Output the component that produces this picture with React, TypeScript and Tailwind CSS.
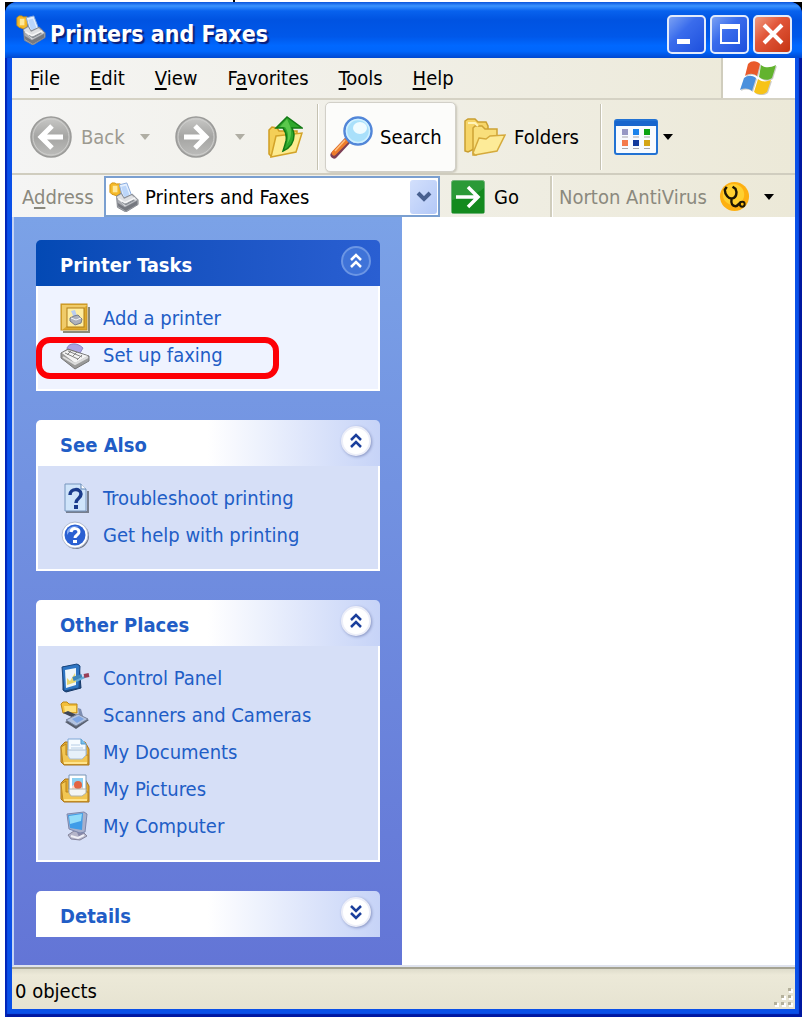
import { useState } from "react";
import type { ReactNode } from "react";

type Task = {
  label: string;
  icon: ReactNode;
  highlighted?: boolean;
};

const PrinterFolderIcon = ({ className }: { className: string }) => (
  <svg viewBox="0 0 32 32" className={className} aria-hidden="true">
    <path d="M1 3l2-2h3l2 1h4v11l-3 2-6-2-2-2z" fill="#f5b929" stroke="#d2920f" />
    <path d="M4 4h5v7H4z" fill="#ffe89a" />
    <path d="M11 3l8-2 5 13-9 4z" fill="#e4effe" stroke="#86a9dd" />
    <path d="M13 5l5-1 4 10-6 2z" fill="#bcd6fa" />
    <path d="M8 15l5-3 3 5 9-4 6 6v5L18 32l-9-5z" fill="#a9abb1" stroke="#83868d" />
    <path d="M8 16l5-3 3 5 8-4 6 5-13 7z" fill="#dfe0e3" />
    <path d="M9 22l8 5 13-7v4l-12 7-8-5z" fill="#75787f" />
    <path d="M14 21l4 3 9-5" fill="none" stroke="#8d9198" strokeWidth="2" />
    <path d="M10 18l7 4 11-5" fill="none" stroke="#f6f6f7" strokeWidth="1.5" />
  </svg>
);

const WindowsFlag = () => (
  <svg viewBox="0 0 38 34" className="h-[34px] w-[38px]" aria-hidden="true">
    <g fill="#9a9a94" opacity="0.5" transform="translate(1 1)">
      <path d="M8 3c4-4 9-3 12 0l-3 12c-4-3-8-3-12 0z" />
      <path d="M21 4c4 3 9 3 15 0l-4 13c-4 3-9 2-13-1z" />
      <path d="M4 17c4-3 8-3 12 0l-4 13c-4-3-8-3-12-1z" />
      <path d="M18 18c4 3 8 3 13 1l-4 12c-4 3-9 3-13 0z" />
    </g>
    <path d="M8 3c4-4 9-3 12 0l-3 12c-4-3-8-3-12 0z" fill="#e95a2b" />
    <path d="M21 4c4 3 9 3 15 0l-4 13c-4 3-9 2-13-1z" fill="#62b32e" />
    <path d="M4 17c4-3 8-3 12 0l-4 13c-4-3-8-3-12-1z" fill="#4a90dd" />
    <path d="M18 18c4 3 8 3 13 1l-4 12c-4 3-9 3-13 0z" fill="#f7c318" />
  </svg>
);

const RoundArrow = ({ forward = false }: { forward?: boolean }) => (
  <svg viewBox="0 0 42 42" className="h-[42px] w-[42px]" aria-hidden="true">
    <defs>
      <linearGradient id={forward ? "fwd" : "bck"} x1="0" y1="0" x2="0" y2="1">
        <stop offset="0" stopColor="#c9c9c7" />
        <stop offset="0.5" stopColor="#a5a5a3" />
        <stop offset="1" stopColor="#bdbdbb" />
      </linearGradient>
    </defs>
    <circle cx="21" cy="21" r="20" fill={`url(#${forward ? "fwd" : "bck"})`} stroke="#9b9b99" strokeWidth="1.5" />
    <circle cx="21" cy="21" r="18" fill="none" stroke="#cfcfcd" />
    <path
      d={forward ? "M9 21h21M20 10l11 11-11 11" : "M33 21H12M22 10L11 21l11 11"}
      fill="none"
      stroke="#fff"
      strokeWidth="5"
    />
  </svg>
);

const UpFolderIcon = () => (
  <svg viewBox="0 0 36 42" className="h-[42px] w-[36px]" aria-hidden="true">
    <path d="M2 14l3-3 5 1 2 3h18v12L4 40l-2-2z" fill="#f4cf57" stroke="#cf9d22" strokeWidth="1.5" />
    <path d="M9 20l26-3-6 19-25 5z" fill="#fdeb90" stroke="#d3a328" strokeWidth="1.5" />
    <path d="M20 1L9 12h7c3 4 4 8 3 13-1 4-2 7-3 10 7-3 11-9 11-16 0-3-1-5-2-7h10z" fill="#2fa82c" stroke="#137a15" strokeWidth="1.5" />
    <path d="M20 3l-7 8h5c3 4 4 9 2 17 4-5 5-11 3-18" fill="#79dd62" opacity="0.6" />
  </svg>
);

const MagnifierIcon = () => (
  <svg viewBox="0 0 44 44" className="h-[44px] w-[44px]" aria-hidden="true">
    <path d="M17 26L4 40" stroke="#7d3f55" strokeWidth="7" strokeLinecap="round" />
    <path d="M17 25L4 38" stroke="#ee7b2a" strokeWidth="5" strokeLinecap="round" />
    <path d="M15 25L5 36" stroke="#ffc07f" strokeWidth="1.5" />
    <circle cx="28" cy="16" r="13.500" fill="#a9e0fb" stroke="#5286d8" strokeWidth="2.500" />
    <circle cx="28" cy="16" r="11.500" fill="none" stroke="#d0f0ff" strokeWidth="1.500" />
    <ellipse cx="30" cy="13" rx="7" ry="6" fill="#effbff" />
  </svg>
);

const FoldersIcon = () => (
  <svg viewBox="0 0 42 38" className="h-[38px] w-[42px]" aria-hidden="true">
    <path d="M1 3l3-2h7l3 3h8l2 4v16L4 34l-3-1z" fill="#f6d568" stroke="#c99e30" strokeWidth="1.500" />
    <path d="M9 10l2-2h7l3 3h12v14L12 37H9z" fill="#f9df7b" stroke="#cda235" strokeWidth="1.500" />
    <path d="M15 20l7 1 4-3 15-1-8 16-22 4-2-2z" fill="#fdeb98" stroke="#d5aa3c" strokeWidth="1.500" />
    <path d="M4 5h7l3 3" fill="none" stroke="#fff3b8" strokeWidth="2" />
  </svg>
);

const ViewsIcon = () => (
  <svg viewBox="0 0 44 36" className="h-[36px] w-[44px]" aria-hidden="true">
    <rect x="1" y="1" width="42" height="34" rx="2" fill="#f8fbff" stroke="#2272d3" strokeWidth="2" />
    <path d="M1 2h42v5H1z" fill="#1765cd" />
    <path d="M8 10h6v6H8z" fill="#9698c4" />
    <path d="M19 10h6v6h-6z" fill="#1b83ec" />
    <path d="M30 10h6v6h-6z" fill="#0ca313" />
    <path d="M8 21h6v6H8z" fill="#f47a4c" />
    <path d="M19 21h6v6h-6z" fill="#123a9d" />
    <path d="M30 21h6v6h-6z" fill="#d4a516" />
    <path d="M8 18h6M19 18h6M30 18h6M8 29.500h6M19 29.500h6M30 29.500h6" stroke="#a7a7ad" />
  </svg>
);

const GoIcon = () => (
  <svg viewBox="0 0 34 34" className="h-[34px] w-[34px]" aria-hidden="true">
    <rect x="0.500" y="0.500" width="33" height="33" rx="2" fill="#2b9a37" stroke="#6fb377" />
    <path d="M1 20c10-3 22-3 32-12v25H1z" fill="#138a1e" />
    <path d="M5 17h22M17 7l10 10-10 10" fill="none" stroke="#fff" strokeWidth="3.500" />
  </svg>
);

const StethoscopeIcon = () => (
  <svg viewBox="0 0 32 32" className="h-[31px] w-[31px]" aria-hidden="true">
    <circle cx="16" cy="16" r="15" fill="#fdb012" />
    <circle cx="15" cy="14" r="11" fill="#ffd030" />
    <path d="M8 6L6 9c0 5 4 10 8 9s5-6 3-10l-3-2M13 18c-1 6 1 8 4 8s4-5 7-4" fill="none" stroke="#1d1604" strokeWidth="2.500" />
    <circle cx="24" cy="24" r="2.500" fill="#fdbc12" stroke="#1d1604" strokeWidth="2" />
  </svg>
);

const iconClass = "h-[30px] w-[30px] shrink-0";

const AddPrinterIcon = () => (
  <svg viewBox="0 0 30 30" className={iconClass} aria-hidden="true">
    <path d="M3 29h26V4" fill="none" stroke="#8b8978" strokeWidth="2" />
    <rect x="1" y="1" width="26" height="26" fill="#dda92d" stroke="#c3901f" />
    <path d="M2 2h25l-4 4H7v17l-5 4z" fill="#f0cb69" />
    <rect x="7" y="5" width="17" height="19" fill="#ffedA0" stroke="#b17f18" />
    <path d="M11 8l4-1 2 6-3 2z" fill="#b9cdf0" />
    <path d="M10 15l4-2 4-1 4 4-1 4-6 2-5-4z" fill="#adb1bc" stroke="#777c89" />
    <path d="M11 15l5 2 5-2" stroke="#f5f6f8" fill="none" />
  </svg>
);

const FaxIcon = () => (
  <svg viewBox="0 0 30 30" className={iconClass} aria-hidden="true">
    <path d="M7 8c2-5 10-6 16 0l-3 5-12-2z" fill="#a9a4e4" stroke="#8b87c4" />
    <path d="M1 13l7-4 21 7v5l-14 8L1 18z" fill="#9a9a9a" stroke="#777" />
    <path d="M2 13l6-3 20 6-13 7z" fill="#f4f4f4" />
    <path d="M8 11l14 6M5 13l13 6M12 10l-5 5M17 12l-5 5M22 15l-5 5" stroke="#858585" />
    <path d="M3 17l12 7 13-7" fill="none" stroke="#dcdcdc" strokeWidth="2" />
  </svg>
);

const TroubleshootIcon = () => (
  <svg viewBox="0 0 30 30" className={iconClass} aria-hidden="true">
    <path d="M6 29h22V8" fill="none" stroke="#777f8f" strokeWidth="2" />
    <path d="M5 1h16l5 5v22H5z" fill="#cfe4fa" stroke="#7795bd" />
    <path d="M21 1v5h5" fill="#fff" stroke="#5f83b5" />
    <path d="M10 12c0-7 11-7 11-1 0 5-5 4-5 9" fill="none" stroke="#1b3c8c" strokeWidth="3.500" />
    <path d="M14 22h4v4h-4z" fill="#1b3c8c" />
  </svg>
);

const HelpIcon = () => (
  <svg viewBox="0 0 30 30" className={iconClass} aria-hidden="true">
    <circle cx="16" cy="16" r="13" fill="#6f7688" />
    <circle cx="15" cy="15" r="13" fill="#fff" stroke="#b5bdd0" />
    <circle cx="15" cy="15" r="10.500" fill="#2b60d2" />
    <path d="M7 11c2-4 7-6 12-4-5 0-9 3-12 8z" fill="#87adf3" />
    <path d="M11 12c1-5 8-4 8 0 0 3-4 3-4 6" fill="none" stroke="#fff" strokeWidth="3" />
    <path d="M13 20h4v3h-4z" fill="#fff" />
  </svg>
);

const ControlPanelIcon = () => (
  <svg viewBox="0 0 30 30" className={iconClass} aria-hidden="true">
    <path d="M3 4l16-2 2 23-15 4-3-2z" fill="#22528f" stroke="#143765" />
    <path d="M2 4l15-3 3 2-1 22-15 3z" fill="#2e75c3" stroke="#1a467f" />
    <path d="M5 7l11-2v17L6 25z" fill="#eef6fa" />
    <path d="M7 15l3 3 5-8 1 9-9 3z" fill="#e8d670" />
    <path d="M13 16l9-3" stroke="#3d86b9" strokeWidth="4" />
    <path d="M16 18l9-4" stroke="#65abd7" strokeWidth="2" />
    <path d="M24 13l5-1" stroke="#993f57" strokeWidth="4" />
  </svg>
);

const ScannerIcon = () => (
  <svg viewBox="0 0 30 30" className={iconClass} aria-hidden="true">
    <path d="M1 4l2-2h4l2 2h8v9H3z" fill="#f3bf3b" stroke="#b98617" />
    <path d="M4 6h12v6H5z" fill="#ffe17b" />
    <path d="M3 13l13 6 3-3-11-5z" fill="#3f4657" />
    <path d="M18 8l3 1 2 7-4 1z" fill="#7d8db1" />
    <path d="M5 22l14-7 10 5-13 9z" fill="#585f6e" />
    <path d="M6 20l12-6 10 5-12 7z" fill="#b3c3e0" stroke="#77829b" />
    <path d="M12 19l7-3 5 3-7 4z" fill="#7ea5e3" />
  </svg>
);

const DocumentsIcon = () => (
  <svg viewBox="0 0 30 30" className={iconClass} aria-hidden="true">
    <path d="M1 9l4-4h20l4 7v16H4l-3-3z" fill="#e3aa2d" stroke="#a8741b" />
    <path d="M8 2h13l5 5v12H8z" fill="#f6fbff" stroke="#7fa6d5" />
    <path d="M21 2v5h5" fill="#74c0ee" stroke="#579acb" />
    <path d="M11 8h9M11 11h12M11 14h12" stroke="#b6cde6" />
    <path d="M1 10l5-3v11h22v9H3z" fill="#f2c652" stroke="#b98421" />
    <path d="M8 13h18v5l-4 4H10l-2-3z" fill="#e7f1fa" stroke="#a9bdd3" />
    <path d="M4 26h23" stroke="#ffe48d" strokeWidth="2" />
  </svg>
);

const PicturesIcon = () => (
  <svg viewBox="0 0 30 30" className={iconClass} aria-hidden="true">
    <path d="M1 9l4-4h20l4 7v16H4l-3-3z" fill="#e3aa2d" stroke="#a8741b" />
    <path d="M9 1h17v20H9z" fill="#fff" stroke="#7895b6" />
    <path d="M12 4h11v13H12z" fill="#8ed1f1" />
    <path d="M12 12l5-3 6 5v4H12z" fill="#fbd9cc" />
    <circle cx="18" cy="11" r="4" fill="#e36441" />
    <path d="M1 10l5-3v11h22v9H3z" fill="#f2c652" stroke="#b98421" />
    <path d="M9 15h17v4l-4 3H11l-2-3z" fill="#f3f5f6" stroke="#b4b4a8" />
    <path d="M4 26h23" stroke="#ffe48d" strokeWidth="2" />
  </svg>
);

const ComputerIcon = () => (
  <svg viewBox="0 0 30 30" className={iconClass} aria-hidden="true">
    <path d="M8 24l6-4 9 1 4 4-7 4-9-1z" fill="#b5b5c9" stroke="#85859c" />
    <path d="M16 19l7-2 1 7-5 2z" fill="#8889a9" />
    <path d="M7 3L24 1l3 2-2 18-5 1L9 18z" fill="#a9b0cb" stroke="#7c87ac" />
    <path d="M8 4l15-2-1 17-12-2z" fill="#3f9ce8" />
    <path d="M9 5l13-2-1 7-11 3z" fill="#91dcfa" />
    <path d="M11 25l7 2 6-3" fill="none" stroke="#f0f0f6" strokeWidth="2" />
  </svg>
);

const panels: { title: string; primary?: boolean; open: boolean; tasks: Task[] }[] = [
  {
    title: "Printer Tasks",
    primary: true,
    open: true,
    tasks: [
      { label: "Add a printer", icon: <AddPrinterIcon /> },
      { label: "Set up faxing", icon: <FaxIcon />, highlighted: true },
    ],
  },
  {
    title: "See Also",
    open: true,
    tasks: [
      { label: "Troubleshoot printing", icon: <TroubleshootIcon /> },
      { label: "Get help with printing", icon: <HelpIcon /> },
    ],
  },
  {
    title: "Other Places",
    open: true,
    tasks: [
      { label: "Control Panel", icon: <ControlPanelIcon /> },
      { label: "Scanners and Cameras", icon: <ScannerIcon /> },
      { label: "My Documents", icon: <DocumentsIcon /> },
      { label: "My Pictures", icon: <PicturesIcon /> },
      { label: "My Computer", icon: <ComputerIcon /> },
    ],
  },
  { title: "Details", open: false, tasks: [] },
];

const menus = [
  ["", "F", "ile"],
  ["", "E", "dit"],
  ["", "V", "iew"],
  ["F", "a", "vorites"],
  ["", "T", "ools"],
  ["", "H", "elp"],
];

const Caret = ({ className }: { className: string }) => (
  <svg viewBox="0 0 10 6" className={`h-[6px] w-[10px] ${className}`} aria-hidden="true">
    <path d="M0 0h10L5 6z" fill="currentColor" />
  </svg>
);

const Divider = () => (
  <span className="h-[66px] w-[2px] shrink-0 border-l border-[#c5c2b2] bg-white" />
);

const Panel = ({ title, primary, open: initiallyOpen, tasks }: (typeof panels)[number]) => {
  const [open, setOpen] = useState(initiallyOpen);

  return (
    <section>
      <h2>
        <button
          type="button"
          aria-expanded={open}
          onClick={() => setOpen(!open)}
          className={`flex h-[46px] w-full items-center justify-between rounded-t-[5px] bg-linear-to-r pr-[9px] pl-6 text-[20px] font-bold ${
            primary
              ? "from-[#0349b4] to-[#2a5fd2] text-white"
              : "from-white from-50% to-[#c6d3f7] text-[#215dc6]"
          }`}
        >
          <span className="pt-1">{title}</span>
          <span
            className={`mb-1 flex h-[30px] w-[30px] items-center justify-center rounded-full border-2 ${
              primary
                ? "border-[#6c96e4] bg-[#3f73d8] text-white"
                : "border-[#eceef8] bg-white text-[#1b3f9c] shadow-[1px_1px_3px_#8a97c4]"
            }`}
          >
            <svg viewBox="0 0 14 16" className="h-[16px] w-[14px]" aria-hidden="true">
              <path
                d={open ? "M2 7l5-5 5 5M2 14l5-5 5 5" : "M2 2l5 5 5-5M2 9l5 5 5-5"}
                fill="none"
                stroke="currentColor"
                strokeWidth="2.500"
              />
            </svg>
          </span>
        </button>
      </h2>
      {open && tasks.length > 0 && (
        <ul
          className={`border-2 border-t-0 border-white pt-[13px] pb-4 pl-[22px] ${
            primary ? "bg-[#eff3ff]" : "bg-[#d6dff7]"
          }`}
        >
          {tasks.map((task) => (
            <li key={task.label} className="relative flex h-[37px] items-center">
              <a href="#" className="flex items-center gap-[13px] whitespace-nowrap text-[#215dc6] hover:underline">
                {task.icon}
                {task.label}
              </a>
              {task.highlighted && (
                <span className="pointer-events-none absolute top-px -left-6 h-[42px] w-[243px] rounded-[14px] border-6 border-[#fd0006]" />
              )}
            </li>
          ))}
        </ul>
      )}
    </section>
  );
};

const captionButton =
  "flex h-[39px] w-[39px] items-center justify-center rounded-[5px] border-2 border-[#e3ebfb]";

const App = () => {
  return (
    <div className="flex min-h-screen flex-col bg-white pr-[2px] pb-[6px] pl-[5px] font-['DejaVu_Sans_Condensed','DejaVu_Sans',sans-serif] text-[20px] leading-6 text-black">
      <div className="flex h-[2px] justify-start pl-[228px]">
        <span className="w-[2px] bg-black" />
      </div>

      <div className="flex flex-1 flex-col bg-black">
        <div className="flex flex-1 flex-col rounded-t-[12px] bg-[#0a50e8] shadow-[inset_2px_0_1px_#0024b8,inset_-3px_-3px_1px_#0018a0]">
          <header className="flex h-[56px] items-center justify-between rounded-t-[12px] bg-[linear-gradient(180deg,#0a55dc_0%,#3a94ff_7%,#0862ee_16%,#0053e1_32%,#0058ea_62%,#0068ff_78%,#0066fc_88%,#0048d0_100%)] pr-[10px] pl-[11px]">
            <div className="flex items-center gap-[4px]">
              <PrinterFolderIcon className="h-[30px] w-[30px]" />
              <h1 className="pt-2 text-[23px] font-bold text-white [text-shadow:2px_2px_1px_#0a1f7a]">
                Printers and Faxes
              </h1>
            </div>
            <div className="flex gap-1 pt-2">
              <button type="button" aria-label="Minimize" className={`${captionButton} bg-linear-to-br from-[#7ba0f3] via-[#3a6cec] via-40% to-[#1d4fdd]`}>
                <svg viewBox="0 0 24 24" className="h-6 w-6" aria-hidden="true">
                  <path d="M2 17h13v5H2z" fill="#fff" />
                </svg>
              </button>
              <button type="button" aria-label="Maximize" className={`${captionButton} bg-linear-to-br from-[#7ba0f3] via-[#3a6cec] via-40% to-[#1d4fdd]`}>
                <svg viewBox="0 0 24 24" className="h-6 w-6" aria-hidden="true">
                  <path d="M2 2h20v20H2zM4 7v13h16V7z" fill="#fff" fillRule="evenodd" />
                </svg>
              </button>
              <button type="button" aria-label="Close" className={`${captionButton} bg-linear-to-br from-[#ee9a80] via-[#e2573a] via-40% to-[#c63410]`}>
                <svg viewBox="0 0 24 24" className="h-6 w-6" aria-hidden="true">
                  <path d="M3 3l18 18M21 3L3 21" stroke="#fff" strokeWidth="4" />
                </svg>
              </button>
            </div>
          </header>

          <div className="mx-[7px] mb-[8px] flex flex-1 flex-col bg-linear-to-r from-[#f5f5f4] to-[#ece9d8]">
            <div className="flex h-[42px] border-b-2 border-[#d5d2c4]">
              <nav className="flex flex-1 items-center gap-[30px] border-r-2 border-[#d0cdbd] pl-[18px]">
                {menus.map(([before, key, after]) => (
                  <button type="button" key={key} className="whitespace-nowrap">
                    {before}
                    <u className="underline-offset-3">{key}</u>
                    {after}
                  </button>
                ))}
              </nav>
              <div className="flex w-[72px] items-center justify-center bg-white">
                <WindowsFlag />
              </div>
            </div>

            <div className="flex h-[75px] items-center border-b-2 border-[#d0cdbf] pl-[18px]">
              <button type="button" disabled className="flex items-center gap-[9px] text-[#9c9a90]">
                <RoundArrow />
                <span className="w-[43px] text-left">Back</span>
              </button>
              <Caret className="ml-4 text-[#b0aea4]" />
              <button type="button" disabled aria-label="Forward" className="ml-[25px]">
                <RoundArrow forward />
              </button>
              <Caret className="ml-[18px] text-[#b0aea4]" />
              <button type="button" aria-label="Up" className="mr-[14px] ml-[22px]">
                <UpFolderIcon />
              </button>
              <Divider />
              <button
                type="button"
                className="ml-[6px] flex h-[70px] w-[131px] items-center gap-[6px] rounded-[5px] border border-[#d2d0c8] bg-[#fcfcfa] pl-1 shadow-[1px_1px_2px_#c8c5b8]"
              >
                <MagnifierIcon />
                Search
              </button>
              <button type="button" className="mr-5 ml-2 flex w-[116px] items-center gap-2">
                <FoldersIcon />
                Folders
              </button>
              <Divider />
              <button type="button" aria-label="Views" className="ml-3 flex items-center gap-[5px]">
                <ViewsIcon />
                <Caret className="text-black" />
              </button>
            </div>

            <div className="flex h-[42px] items-center pt-px">
              <label htmlFor="address" className="w-[92px] shrink-0 pl-[10px] text-[#8b897e]">
                A<u className="underline-offset-3">d</u>dress
              </label>
              <div className="flex h-full w-[336px] items-center border-2 border-[#7a9fd0] bg-white pr-px pl-[3px]">
                <PrinterFolderIcon className="h-[30px] w-[30px] shrink-0" />
                <select id="address" className="min-w-0 flex-1 appearance-none bg-white pl-[6px]">
                  <option>Printers and Faxes</option>
                </select>
                <span className="flex h-[34px] w-[27px] items-center justify-center rounded-[3px] bg-linear-to-br from-[#d3e0fc] to-[#b3c8f7]">
                  <svg viewBox="0 0 16 12" className="h-[12px] w-[16px]" aria-hidden="true">
                    <path d="M2 2l6 6 6-6" fill="none" stroke="#48608f" strokeWidth="4" />
                  </svg>
                </span>
              </div>
              <button type="button" className="ml-[11px] flex w-[99px] items-center gap-[9px]">
                <GoIcon />
                Go
              </button>
              <span className="h-full w-[3px] border-l-2 border-[#d0cdbd] bg-white" />
              <button type="button" className="ml-[6px] flex items-center text-[#8b897e]">
                <span className="w-[160px] text-left whitespace-nowrap">Norton AntiVirus</span>
                <StethoscopeIcon />
                <Caret className="ml-[14px] text-black" />
              </button>
            </div>

            <div className="flex flex-1 border-b-2 border-l-2 border-b-[#dfe3ee] border-l-[#c3d3f5] bg-white">
              <aside className="flex w-[388px] shrink-0 flex-col gap-[29px] bg-linear-to-b from-[#7ba2e7] to-[#6375d6] px-[22px] pt-[23px] pb-[28px]">
                {panels.map((panel) => (
                  <Panel key={panel.title} {...panel} />
                ))}
              </aside>
              <main className="flex-1 bg-white" aria-label="Printers" />
            </div>

            <footer className="flex h-[42px] items-center justify-between border-t-2 border-[#a5a392] bg-linear-to-b from-[#dedccb] via-[#ece9d8] via-15% to-[#e6e3d1] pl-[3px]">
              <span className="pt-1">0 objects</span>
              <svg viewBox="0 0 22 22" className="h-[22px] w-[22px] self-end" aria-hidden="true">
                <path d="M16 2h4v4h-4zM9 9h4v4H9zM16 9h4v4h-4zM2 16h4v4H2zM9 16h4v4H9zM16 16h4v4h-4z" fill="#fff" />
                <path d="M15 1h3v3h-3zM8 8h3v3H8zM15 8h3v3h-3zM1 15h3v3H1zM8 15h3v3H8zM15 15h3v3h-3z" fill="#b5b19c" />
              </svg>
            </footer>
          </div>
        </div>
      </div>
    </div>
  );
};

export default App;
